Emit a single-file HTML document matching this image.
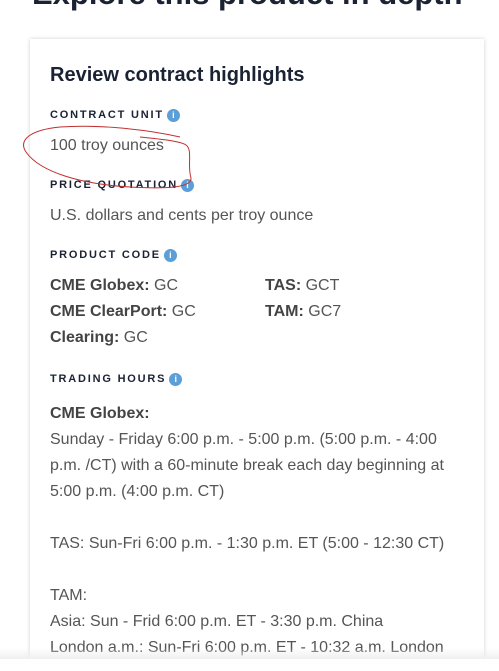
<!DOCTYPE html>
<html><head><style>
body{margin:0;width:499px;height:671px;background:#fff;overflow:hidden;position:relative;font-family:"Liberation Sans",sans-serif;}
.h1{position:absolute;left:32px;top:-24px;font-size:31px;font-weight:bold;color:#1a2233;white-space:nowrap;}
.card{position:absolute;left:30px;top:39px;width:454px;height:620px;background:#fff;box-shadow:0 0 4px rgba(0,0,0,.18);}
.fade{position:absolute;left:0;top:648px;width:499px;height:12px;background:linear-gradient(#fff0,#eee)}
.t{position:absolute;left:50px;white-space:nowrap;color:#555;font-size:16px}
.h2{font-size:20px;color:#1a2233;font-weight:bold;top:64px}
.lab{font-size:11px;font-weight:bold;letter-spacing:1.8px;color:#1a2233}
.i{display:inline-block;width:13px;height:13px;border-radius:50%;background:#5b9fd6;color:#fff;font-size:9px;text-align:center;line-height:13px;letter-spacing:0;vertical-align:0;margin-left:3px}
b{color:#444;font-weight:600}
</style></head><body>
<div class="h1">Explore this product in depth</div>
<div class="card"></div>
<div class="t h2">Review contract highlights</div>
<div class="t lab" style="top:109px">CONTRACT UNIT<span class="i">i</span></div>
<div class="t" style="top:137px">100 troy ounces</div>
<div class="t lab" style="top:179px">PRICE QUOTATION<span class="i">i</span></div>
<div class="t" style="top:207px">U.S. dollars and cents per troy ounce</div>
<div class="t lab" style="top:249px">PRODUCT CODE<span class="i">i</span></div>
<div class="t" style="top:277px"><b>CME Globex:</b> GC</div>
<div class="t" style="top:277px;left:265px"><b>TAS:</b> GCT</div>
<div class="t" style="top:303px"><b>CME ClearPort:</b> GC</div>
<div class="t" style="top:303px;left:265px"><b>TAM:</b> GC7</div>
<div class="t" style="top:329px"><b>Clearing:</b> GC</div>
<div class="t lab" style="top:373px">TRADING HOURS<span class="i">i</span></div>
<div class="t" style="top:401px;line-height:26px"><b>CME Globex:</b><br>Sunday - Friday 6:00 p.m. - 5:00 p.m. (5:00 p.m. - 4:00<br>p.m. /CT) with a 60-minute break each day beginning at<br>5:00 p.m. (4:00 p.m. CT)<br><br>TAS: Sun-Fri 6:00 p.m. - 1:30 p.m. ET (5:00 - 12:30 CT)<br><br>TAM:<br>Asia: Sun - Frid 6:00 p.m. ET - 3:30 p.m. China<br>London a.m.: Sun-Fri 6:00 p.m. ET - 10:32 a.m. London</div>
<div class="fade"></div>
<div style="position:absolute;left:0;top:659px;width:499px;height:12px;background:#fff"></div>
<svg style="position:absolute;left:0;top:0" width="499" height="671"><path d="M180 137 C150 130 100 124 60 127 C30 130 18 140 26 152 C40 172 80 184 130 187 C165 189 192 188 191 178 C187 165 193 150 186 145 C180 141 160 139 140 137" fill="none" stroke="#c03030" stroke-width="1"/></svg>
</body></html>
